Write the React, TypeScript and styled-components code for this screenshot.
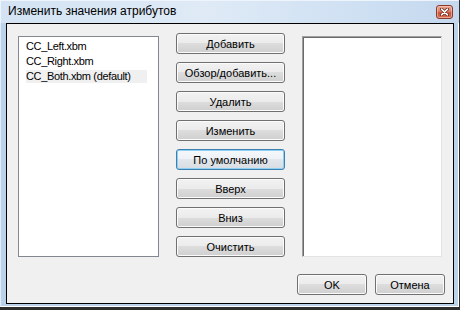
import React from "react";
import styled, { createGlobalStyle } from "styled-components";

const Global = createGlobalStyle`
  html, body { margin: 0; padding: 0; background: #2e2e2e; }
  body { font-family: "Liberation Sans", Arial, sans-serif; }
`;

const Window = styled.div`
  width: 459px;
  height: 307px;
  box-sizing: border-box;
  display: flex;
  flex-direction: column;
  background: #bcd2ea;
  box-shadow: inset 1px 1px 0 #e4edf7, inset -1px -1px 0 #ffffff;
`;

const TitleBar = styled.div`
  height: 23px;
  flex: none;
  display: flex;
  align-items: flex-start;
  justify-content: space-between;
  padding: 0 6px 0 8px;
  background: linear-gradient(to right, #d3e3f3 0%, #dfeaf6 45%, #d0e1f3 75%, #c4d8ee 100%);
  box-shadow: inset 1px 1px 0 #eef4fb;
`;

const Title = styled.span`
  font-family: "Liberation Sans", Arial, sans-serif;
  font-size: 12px;
  line-height: 23px;
  color: #000;
`;

const CloseButton = styled.div`
  margin-top: 5px;
  width: 17px;
  height: 14px;
  box-sizing: border-box;
  border: 1px solid #8a3b2c;
  border-radius: 3px;
  background: linear-gradient(#eaa894 0%, #dc7f69 45%, #c9533c 55%, #d66e55 100%);
  box-shadow: inset 0 0 0 1px rgba(255, 210, 195, 0.55);
  display: flex;
  align-items: center;
  justify-content: center;
`;

const Body = styled.div`
  flex: 1;
  padding: 0 5px 3px 6px;
  display: flex;
`;

const Client = styled.div`
  flex: 1;
  border: 1px solid #000;
  background: #f0f0f0;
  padding: 12px 8px 7px 11px;
  display: flex;
  flex-direction: column;
`;

const Main = styled.div`
  display: flex;
  align-items: flex-start;
`;

const ListBox = styled.div`
  width: 141px;
  height: 221px;
  box-sizing: border-box;
  border: 1px solid #828790;
  background: #fff;
  padding: 3px 11px 0 7px;
  display: flex;
  flex-direction: column;
  gap: 2px;
`;

const ListItem = styled.div<{ $selected?: boolean }>`
  height: 13px;
  line-height: 13px;
  font-family: "Liberation Sans", Arial, sans-serif;
  font-size: 11px;
  letter-spacing: -0.35px;
  color: #000;
  white-space: nowrap;
  background: ${(p) => (p.$selected ? "#f0f0f0" : "transparent")};
`;

const ButtonColumn = styled.div`
  margin-left: 17px;
  margin-top: -3px;
  display: flex;
  flex-direction: column;
  gap: 8px;
`;

const Button = styled.div<{ $default?: boolean; $w?: number }>`
  width: ${(p) => p.$w ?? 109}px;
  height: 21px;
  box-sizing: border-box;
  border: 1px solid ${(p) => (p.$default ? "#3c7fb1" : "#707070")};
  border-radius: 3px;
  background: ${(p) =>
    p.$default
      ? "linear-gradient(#f4f8fb 0%, #eef2f6 50%, #e2e7ec 50%, #d8dde3 100%)"
      : "linear-gradient(#f2f2f2 0%, #ebebeb 50%, #dddddd 50%, #cfcfcf 100%)"};
  box-shadow: inset 0 0 0 1px ${(p) => (p.$default ? "#8fd0f2" : "#fbfbfb")};
  display: flex;
  align-items: center;
  justify-content: center;
  font-family: "Liberation Sans", Arial, sans-serif;
  font-size: 11px;
  color: #000;
  white-space: nowrap;
`;

const SunkenPanel = styled.div`
  margin-left: 17px;
  width: 140px;
  height: 221px;
  box-sizing: border-box;
  background: #fff;
  border: 1px solid;
  border-color: #a0a0a0 #e3e3e3 #e3e3e3 #a0a0a0;
  box-shadow: inset 1px 1px 0 #696969;
`;

const Footer = styled.div`
  margin-top: 17px;
  display: flex;
  justify-content: flex-end;
  gap: 8px;
`;

const items = ["CC_Left.xbm", "CC_Right.xbm", "CC_Both.xbm (default)"];
const actions = [
  "Добавить",
  "Обзор/добавить...",
  "Удалить",
  "Изменить",
  "По умолчанию",
  "Вверх",
  "Вниз",
  "Очистить",
];

export default function App() {
  return (
    <>
      <Global />
      <Window>
        <TitleBar>
          <Title>Изменить значения атрибутов</Title>
          <CloseButton>
            <svg width="9" height="8" viewBox="0 0 9 8">
              <path d="M1.5 1.2 L7.5 6.8 M7.5 1.2 L1.5 6.8" stroke="#5a2418" strokeWidth="3" strokeLinecap="round" />
              <path d="M1.5 1.2 L7.5 6.8 M7.5 1.2 L1.5 6.8" stroke="#ffffff" strokeWidth="1.6" strokeLinecap="round" />
            </svg>
          </CloseButton>
        </TitleBar>
        <Body>
          <Client>
            <Main>
              <ListBox>
                {items.map((t, i) => (
                  <ListItem key={t} $selected={i === 2}>
                    {t}
                  </ListItem>
                ))}
              </ListBox>
              <ButtonColumn>
                {actions.map((a) => (
                  <Button key={a} $default={a === "По умолчанию"}>
                    {a}
                  </Button>
                ))}
              </ButtonColumn>
              <SunkenPanel />
            </Main>
            <Footer>
              <Button $w={70}>OK</Button>
              <Button $w={70}>Отмена</Button>
            </Footer>
          </Client>
        </Body>
      </Window>
    </>
  );
}
